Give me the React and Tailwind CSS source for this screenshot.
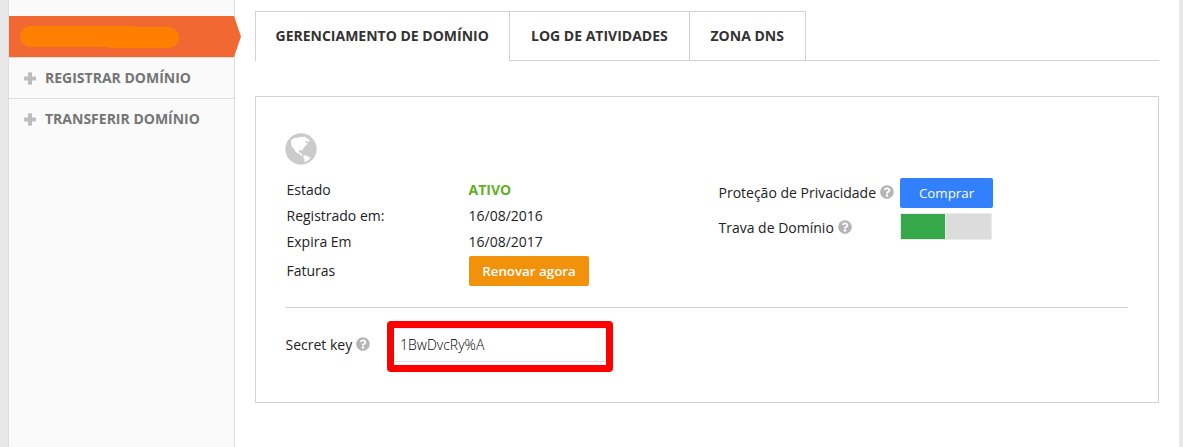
import React from "react";
import { FaQuestionCircle } from "react-icons/fa";

function Plus() {
  return (
    <svg width="12" height="13" viewBox="0 0 12 13" className="shrink-0" fill="#bdbdbd">
      <rect x="4" y="0.3" width="4" height="12.4" rx="0.8" />
      <rect x="0" y="4.5" width="12" height="4" rx="0.8" />
    </svg>
  );
}

function Globe() {
  return (
    <svg width="32" height="32" viewBox="0 0 32 32" className="-ml-px block">
      <circle cx="16" cy="16" r="15.7" fill="#cbcbcb" />
      <path
        fill="#fff"
        d="M6 7.6 8.5 5.2 11.5 4.8 14.5 4.6 15.2 3.8 18 4.2 19.8 3.6 21.2 5 23.6 6 24.6 8 23 9.2 22.2 8 20.8 8.2 20.6 9.6 22.6 10.4 21.6 12 20 13.2 18.8 15 17.6 16.2 17.6 18 16.4 17 14.6 17.2 13.8 18.8 14.6 20 16.2 19.4 16 20.8 17.2 21.4 17.8 23 16 22.4 14.4 21 12.2 20 10.4 18.4 9.4 16.4 7.4 14.4 6.2 11.8Z"
      />
      <path fill="#fff" d="M18.6 22.8 20.6 22.2 22.6 23.2 25 24.4 24.6 26.2 22.6 27.4 20.2 29.2 19.4 28.2 19.6 26.6 18.2 24.8Z" />
    </svg>
  );
}

function SideItem({ label, className }) {
  return (
    <div className={`flex items-center border-t border-[#dedede] pl-[15px] text-[#757575] ${className}`}>
      <Plus />
      <span className="ml-[9px] text-sm font-bold whitespace-nowrap">{label}</span>
    </div>
  );
}

function Row({ label, children, className }) {
  return (
    <div className={`flex items-center ${className}`}>
      <div className="w-[182px] shrink-0">{label}</div>
      {children}
    </div>
  );
}

function Help() {
  return <FaQuestionCircle className="mb-0.5 size-[14px] shrink-0 text-[#b5b5b5]" />;
}

export default function App() {
  return (
    <div className="flex h-[447px] w-[1183px] overflow-hidden bg-white font-['Open_Sans',sans-serif] text-sm text-[#222]">
      <div className="w-2 shrink-0 bg-[#e7e7e7]" />
      <aside className="relative w-[227px] shrink-0 border-x border-[#dedede] bg-[#fafafa] pt-4">
        <div className="flex h-[41px] items-start bg-[#f16832]">
          <svg width="232" height="41" viewBox="0 0 232 41" className="block shrink-0">
            <path d="M225 0 232 20.5 225 41H0V0Z" fill="#f16832" />
            <rect x="11" y="10" width="122" height="21" rx="10.5" fill="#ff8000" />
            <rect x="100" y="11" width="70" height="21" rx="10.5" fill="#ff8000" />
            <rect x="100" y="10" width="19" height="22" fill="#ff8000" />
          </svg>
        </div>
        <SideItem label="REGISTRAR DOMÍNIO" className="h-[41px]" />
        <SideItem label="TRANSFERIR DOMÍNIO" className="h-[41px]" />
      </aside>

      <main className="min-w-0 flex-1 pt-[11px] pr-5 pl-5">
        <nav className="flex h-[50px] text-sm font-bold text-[#333]">
          <div className="flex w-[254px] items-center border-t border-l border-[#d2d2d2] pb-px pl-[19.5px] whitespace-nowrap">GERENCIAMENTO DE DOMÍNIO</div>
          <div className="flex w-[180px] items-center border-t border-b border-l border-[#d2d2d2] pl-[21px] whitespace-nowrap">LOG DE ATIVIDADES</div>
          <div className="flex w-[117px] items-center border border-[#d2d2d2] pl-[20.5px] whitespace-nowrap">ZONA DNS</div>
          <div className="flex-1 border-b border-[#d2d2d2]" />
        </nav>

        <section className="mt-[35px] h-[307px] border border-[#d2d2d2] px-[30px] pt-9">
          <Globe />
          <div className="flex h-[141px] pt-3">
            <div className="w-[432px] pl-[0.5px]">
              <Row label="Estado" className="h-[26px]">
                <span className="font-bold text-[#62b023]">ATIVO</span>
              </Row>
              <Row label="Registrado em:" className="h-[26px]">16/08/2016</Row>
              <Row label="Expira Em" className="h-[26px]">16/08/2017</Row>
              <Row label="Faturas" className="mt-px h-[30px]">
                <button className="ml-[0.5px] h-[30px] w-[120px] rounded-[2px] bg-[#f2920a] pt-px text-[13.3333px] font-semibold text-white">Renovar agora</button>
              </Row>
            </div>
            <div>
              <div className="mt-px flex h-[30px] items-center">
                <div className="flex w-[182px] items-center gap-1 pl-[0.5px]">Proteção de Privacidade <Help /></div>
                <button className="h-[30px] w-[93px] rounded-[2px] bg-[#3380ff] pt-px text-[13.3333px] font-medium text-white">Comprar</button>
              </div>
              <div className="mt-[5px] flex h-[27px] items-center">
                <div className="flex w-[182px] items-center gap-1 pt-[2px] pl-[0.5px]">Trava de Domínio <Help /></div>
                <div className="flex h-[27px] w-[92px] border border-[#eaeaea] bg-[#dcdcdc]">
                  <div className="w-[45px] border-r border-[#eaeaea] bg-[#37a84a]" />
                </div>
              </div>
            </div>
          </div>
          <div className="mt-px flex border-t border-[#cfcfcf] pt-[13px]">
            <div className="flex h-12 w-[101px] items-center gap-1"><span className="-ml-[0.5px]">Secret key</span> <Help /></div>
            <div className="h-[51px] w-[226px] rounded-[4px] border-[7px] border-[#f00]">
              <div className="flex h-[34px] items-center border-t border-b border-t-[#eee] border-b-[#dedede] pl-[6px] font-light text-black">1BwDvcRy%A</div>
            </div>
          </div>
        </section>
      </main>
      <div className="w-1 shrink-0 bg-[#e7e7e7]" />
    </div>
  );
}
